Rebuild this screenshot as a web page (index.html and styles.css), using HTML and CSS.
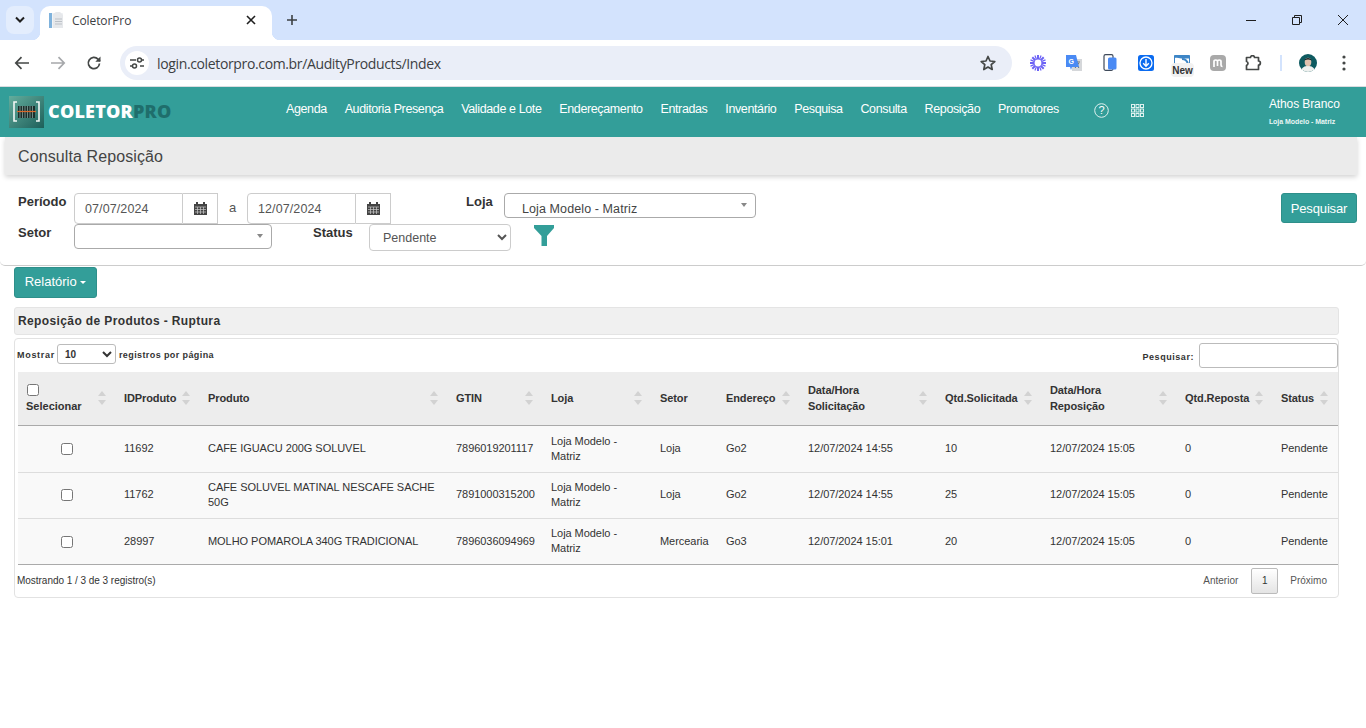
FILE: index.html
```html
<!DOCTYPE html>
<html lang="pt-BR">
<head>
<meta charset="utf-8">
<title>ColetorPro</title>
<link rel="stylesheet" href="styles.css">
</head>
<body>
<div class="tabstrip">
  <div class="tablist"><svg width="12" height="8" viewBox="0 0 12 8"><path d="M2 1.5l4 4 4-4" fill="none" stroke="#1f1f1f" stroke-width="2"/></svg></div>
  <div class="tab">
    <svg class="favicon" width="16" height="16" viewBox="0 0 16 16"><rect x="1" y="1" width="14" height="15" fill="#f1f3f5"/><rect x="1" y="1" width="3" height="15" fill="#7fb2dc"/><path d="M8 0h4l3 3v13H5V2z" fill="#e6e8eb"/><path d="M7 7h7M7 9.500h7M7 12h7" stroke="#bcc1c7"/></svg>
    <span class="tabtitle">ColetorPro</span>
    <svg class="tabclose" width="10" height="10" viewBox="0 0 10 10"><path d="M1 1l8 8M9 1l-8 8" stroke="#1f1f1f" stroke-width="1.6"/></svg>
  </div>
  <svg class="newtab" width="12" height="12" viewBox="0 0 12 12"><path d="M6 1v10M1 6h10" stroke="#3c4043" stroke-width="1.6"/></svg>
  <div class="winctl">
    <svg width="12" height="12" viewBox="0 0 12 12"><path d="M1 6.5h10" stroke="#1f1f1f"/></svg>
    <svg width="12" height="12" viewBox="0 0 12 12"><path d="M1.5 3.5h7v7h-7zM3.5 3.5v-2h7v7h-2" fill="none" stroke="#1f1f1f"/></svg>
    <svg width="12" height="12" viewBox="0 0 12 12"><path d="M1 1l10 10M11 1L1 11" stroke="#1f1f1f"/></svg>
  </div>
</div>
<div class="toolbar">
  <div class="tbtn"><svg width="16" height="14" viewBox="0 0 16 14"><path d="M15 7H2M7.5 1.2L1.8 7l5.7 5.8" fill="none" stroke="#444746" stroke-width="1.7"/></svg></div>
  <div class="tbtn"><svg width="16" height="14" viewBox="0 0 16 14"><path d="M1 7h13M8.500 1.200L14.200 7l-5.700 5.800" fill="none" stroke="#a6a8ab" stroke-width="1.700"/></svg></div>
  <div class="tbtn"><svg width="16" height="16" viewBox="0 0 16 16"><path d="M13.500 8.500a5.600 5.600 0 1 1-1.500-4.300L14 6" fill="none" stroke="#444746" stroke-width="1.700"/><path d="M14.500 1.500v5.200H9.300z" fill="#444746"/></svg></div>
  <div class="omnibox">
    <div class="siteicon"><svg width="14" height="12" viewBox="0 0 14 12"><path d="M0 3h6M10 9h4" stroke="#444746" stroke-width="1.500"/><circle cx="9.500" cy="3" r="2" fill="none" stroke="#444746" stroke-width="1.500"/><circle cx="4.500" cy="9" r="2" fill="none" stroke="#444746" stroke-width="1.500"/><path d="M11.500 3H14M0 9h2.500" stroke="#444746" stroke-width="1.500"/></svg></div>
    <span class="url">login.coletorpro.com.br/AudityProducts/Index</span>
    <svg class="star" width="16" height="16" viewBox="0 0 16 16"><path d="M8 1.500l2 4.500 4.800.5-3.600 3.200 1 4.800L8 12.100l-4.200 2.400 1-4.800L1.200 6.500 6 6z" fill="none" stroke="#444746" stroke-width="1.700" stroke-linejoin="round"/></svg>
  </div>
  <div class="exts">
    <div class="tbtn"><svg width="16" height="16" viewBox="0 0 16 16"><g stroke="#6c63f5" stroke-width="2"><path d="M8 0v16M0 8h16M2.300 2.300l11.400 11.400M13.700 2.300L2.300 13.700"/><path d="M4.900.5l6.200 15M11.100.5L4.900 15.500M.5 4.900l15 6.200M15.500 4.900l-15 6.200" stroke-width="1.200"/></g><circle cx="8" cy="8" r="3.400" fill="#fff"/></svg></div>
    <div class="tbtn"><svg width="18" height="18" viewBox="0 0 18 18"><rect x="7" y="5" width="10" height="12" fill="#d5d7da"/><path d="M9 8h6M12 7v2M10 14l4-5M11 10l3 4" stroke="#6e7277" fill="none"/><path d="M1 1h10l3 12H7l-1 3-1-3H1z" fill="#4a8af4"/><text x="3.500" y="9.500" class="gt">G</text></svg></div>
    <div class="tbtn"><svg width="14" height="17" viewBox="0 0 14 17"><rect x="1" y=".7" width="9" height="15.600" rx="1.500" fill="#fff" stroke="#3f4a5a" stroke-width="1.200"/><rect x="5" y="3.500" width="8.500" height="12" rx="1.500" fill="#4a8af4"/></svg></div>
    <div class="tbtn"><svg width="16" height="16" viewBox="0 0 16 16"><rect width="16" height="16" rx="2.500" fill="#0b6bf0"/><circle cx="8" cy="8" r="6" fill="none" stroke="#fff" stroke-width="1.300"/><path d="M8 4v7M5.200 8.300L8 11.200l2.800-2.900" fill="none" stroke="#fff" stroke-width="1.400"/></svg></div>
    <div class="tbtn newext">
      <svg width="16" height="10" viewBox="0 0 16 10"><path d="M.5 10V.5h15V10" fill="#fff" stroke="#3d85c6"/><path d="M.5.500h15v3H9C6 3.500 4 2 .5 3z" fill="#3d85c6"/><path d="M8 4c3 0 5 1 6 5" fill="none" stroke="#3d85c6" stroke-width="2"/></svg>
      <span class="newbadge">New</span>
    </div>
    <div class="tbtn"><svg width="16" height="16" viewBox="0 0 16 16"><rect width="16" height="16" rx="4" fill="#a9a9a9"/><path d="M4 12V6.500c0-2 3.500-2 3.500 0V11M7.500 6.500c0-2 3.500-2 3.500 0V10c0 1 .5 1.500 1.500 1.500" fill="none" stroke="#fff" stroke-width="1.700"/></svg></div>
    <div class="tbtn"><svg width="18" height="16" viewBox="0 0 18 16"><path d="M1.500 2.500h4c0-2.500 4-2.500 4 0h4v3.500c2.500 0 2.500 4 0 4v4.500h-12v-4c2-1 2-3.500 0-4z" fill="none" stroke="#444746" stroke-width="1.700" stroke-linejoin="round"/></svg></div>
  </div>
  <div class="tsep"></div>
  <div class="tbtn"><svg width="18" height="18" viewBox="0 0 18 18"><defs><clipPath id="av"><circle cx="9" cy="9" r="9"/></clipPath></defs><g clip-path="url(#av)"><rect width="18" height="18" fill="#0e5a60"/><path d="M2 18c0-5 4-6 7-6s7 1 7 6z" fill="#eef0ee"/><ellipse cx="9" cy="8" rx="3.300" ry="4.300" fill="#e0c1ae"/><path d="M5.500 6.500C5.500 3 12.500 3 12.500 6.500 10 5 8 5 5.500 6.500z" fill="#16272a"/></g></svg></div>
  <div class="tbtn"><svg width="4" height="16" viewBox="0 0 4 16"><circle cx="2" cy="2" r="1.600" fill="#444746"/><circle cx="2" cy="8" r="1.600" fill="#444746"/><circle cx="2" cy="14" r="1.600" fill="#444746"/></svg></div>
</div>

<nav class="nav">
  <div class="logo">
    <svg class="logomark" width="35" height="32" viewBox="0 0 35 32"><defs><linearGradient id="lg" x1="0" y1="0" x2="1" y2="1"><stop offset="0" stop-color="#63ad9d"/><stop offset="1" stop-color="#1d5f5a"/></linearGradient></defs><rect width="35" height="32" fill="url(#lg)"/><path d="M8 6H5v19h3M27 6h3v19h-3" fill="none" stroke="#f2f7f5" stroke-width="1.600"/><rect x="9" y="10" width="17" height="12" fill="#1c2d2b"/><path d="M11 10v12M13.500 10v12M16 10v12M18.500 10v12M21 10v12M23.500 10v12" stroke="#6d8b84"/><path d="M8 15.500h19" stroke="#d9692c" stroke-width="1.200"/></svg>
    <span class="logotext">COLETOR<span class="logopro">PRO</span></span>
  </div>
  <div class="menu">
    <a>Agenda</a><a>Auditoria Presença</a><a>Validade e Lote</a><a>Endereçamento</a><a>Entradas</a><a>Inventário</a><a>Pesquisa</a><a>Consulta</a><a>Reposição</a><a>Promotores</a>
  </div>
  <svg class="help" width="15" height="15" viewBox="0 0 15 15"><circle cx="7.500" cy="7.500" r="6.800" fill="none" stroke="#dff1ef"/><text x="7.500" y="11" class="helpq">?</text></svg>
  <svg class="apps" width="13" height="13" viewBox="0 0 13 13"><g fill="none" stroke="#dff1ef"><rect x=".5" y=".5" width="3" height="3"/><rect x="5" y=".5" width="3" height="3"/><rect x="9.500" y=".5" width="3" height="3"/><rect x=".5" y="5" width="3" height="3"/><rect x="5" y="5" width="3" height="3"/><rect x="9.500" y="5" width="3" height="3"/><rect x=".5" y="9.500" width="3" height="3"/><rect x="5" y="9.500" width="3" height="3"/><rect x="9.500" y="9.500" width="3" height="3"/></g></svg>
  <div class="user">
    <div class="username">Athos Branco</div>
    <div class="userstore">Loja Modelo - Matriz</div>
  </div>
</nav>

<div class="crumb">Consulta Reposição</div>

<section class="filters">
  <div class="frows">
    <div class="frow">
      <label class="flabel lper">Período</label>
      <div class="dategroup"><span class="dateval">07/07/2024</span><span class="addon"><svg class="cal" width="13" height="13" viewBox="0 0 13 13"><path d="M0 2h13v11H0z" fill="#444"/><path d="M3 0v3M10 0v3" stroke="#444" stroke-width="2"/><path d="M1 5h11M1 7.500h11M1 10h11M3.500 5v7M6.500 5v7M9.500 5v7" stroke="#ccc" stroke-width=".7"/></svg></span></div>
      <span class="ate">a</span>
      <div class="dategroup"><span class="dateval">12/07/2024</span><span class="addon"><svg class="cal" width="13" height="13" viewBox="0 0 13 13"><path d="M0 2h13v11H0z" fill="#444"/><path d="M3 0v3M10 0v3" stroke="#444" stroke-width="2"/><path d="M1 5h11M1 7.500h11M1 10h11M3.500 5v7M6.500 5v7M9.500 5v7" stroke="#ccc" stroke-width=".7"/></svg></span></div>
      <label class="flabel lloja">Loja</label>
      <div class="sel2 sel2loja"><span>Loja Modelo - Matriz</span><i class="sel2arrow"></i></div>
    </div>
    <div class="frow">
      <label class="flabel lset">Setor</label>
      <div class="sel2 sel2setor"><i class="sel2arrow"></i></div>
      <label class="flabel lstat">Status</label>
      <select class="statussel"><option>Pendente</option></select>
      <svg class="funnel" width="20" height="21" viewBox="0 0 20 21"><path d="M0 0h20v3l-7 8v10H7.500V11L0 3z" fill="#339e99"/></svg>
    </div>
  </div>
  <button class="btn btnsearch">Pesquisar</button>
</section>

<button class="btn btnreport">Relatório <i class="caret"></i></button>

<div class="ptitle">Reposição de Produtos - Ruptura</div>

<div class="panel">
  <div class="tctl">
    <div class="lenctl"><span class="lenlabel">Mostrar</span><select class="lensel"><option>10</option></select><span>registros por página</span></div>
    <div class="searchctl"><span>Pesquisar:</span><input class="searchinput" type="text"></div>
  </div>
  <table class="grid">
    <thead>
      <tr>
        <th class="c1"><input type="checkbox" class="chkhead"><br>Selecionar<i class="sort"></i></th>
        <th class="c2">IDProduto<i class="sort"></i></th>
        <th class="c3">Produto<i class="sort"></i></th>
        <th class="c4">GTIN<i class="sort"></i></th>
        <th class="c5">Loja<i class="sort"></i></th>
        <th class="c6">Setor</th>
        <th class="c7">Endereço<i class="sort"></i></th>
        <th class="c8">Data/Hora<br>Solicitação<i class="sort"></i></th>
        <th class="c9">Qtd.Solicitada<i class="sort"></i></th>
        <th class="c10">Data/Hora<br>Reposição<i class="sort"></i></th>
        <th class="c11">Qtd.Reposta<i class="sort"></i></th>
        <th class="c12">Status<i class="sort"></i></th>
      </tr>
    </thead>
    <tbody>
      <tr>
        <td class="tc"><input type="checkbox"></td><td>11692</td><td>CAFE IGUACU 200G SOLUVEL</td><td>7896019201117</td><td>Loja Modelo - Matriz</td><td>Loja</td><td>Go2</td><td>12/07/2024 14:55</td><td>10</td><td>12/07/2024 15:05</td><td>0</td><td>Pendente</td>
      </tr>
      <tr>
        <td class="tc"><input type="checkbox"></td><td>11762</td><td>CAFE SOLUVEL MATINAL NESCAFE SACHE 50G</td><td>7891000315200</td><td>Loja Modelo - Matriz</td><td>Loja</td><td>Go2</td><td>12/07/2024 14:55</td><td>25</td><td>12/07/2024 15:05</td><td>0</td><td>Pendente</td>
      </tr>
      <tr>
        <td class="tc"><input type="checkbox"></td><td>28997</td><td>MOLHO POMAROLA 340G TRADICIONAL</td><td>7896036094969</td><td>Loja Modelo - Matriz</td><td>Mercearia</td><td>Go3</td><td>12/07/2024 15:01</td><td>20</td><td>12/07/2024 15:05</td><td>0</td><td>Pendente</td>
      </tr>
    </tbody>
  </table>
  <div class="tfoot">
    <span class="tinfo">Mostrando 1 / 3 de 3 registro(s)</span>
    <div class="pager"><span>Anterior</span><span class="pcur">1</span><span>Próximo</span></div>
  </div>
</div>
</body>
</html>
```
FILE: styles.css
```css
* { box-sizing: border-box; }
html, body { margin: 0; padding: 0; background: #fff; overflow: hidden; }
body { font-family: "Liberation Sans", Arial, sans-serif; color: #333; width: 1366px; height: 728px; }

.tabstrip { height: 40px; background: #d3e3fd; display: flex; align-items: flex-start; padding: 6px 0 0 6px; }
.tablist { width: 28px; height: 28px; border-radius: 8px; background: #e3edfd; display: flex; align-items: center; justify-content: center; }
.tab { position: relative; margin-left: 6px; width: 232px; height: 34px; background: #fff; border-radius: 10px 10px 0 0; display: flex; align-items: center; padding: 0 16px 6px 8px; }
.tab::before, .tab::after { content: ""; position: absolute; bottom: 0; width: 8px; height: 8px; }
.tab::before { left: -8px; background: radial-gradient(circle at 0 0, #d3e3fd 8px, #fff 8.5px); }
.tab::after { right: -8px; background: radial-gradient(circle at 100% 0, #d3e3fd 8px, #fff 8.5px); }
.favicon { margin-right: 8px; }
.tabtitle { flex: 1; font: 12px "Open Sans", sans-serif; color: #3c4043; letter-spacing: -.1px; }
.newtab { margin: 8px 0 0 14px; }
.winctl { margin-left: auto; display: flex; gap: 34px; padding: 8px 17px 0 0; }

.toolbar { height: 47px; background: #fff; border-radius: 10px 10px 0 0; border-bottom: 1px solid #dadce0; display: flex; align-items: center; padding: 0 4px 1px; margin-bottom: 0; }
.tbtn { width: 36px; height: 34px; display: flex; align-items: center; justify-content: center; flex: none; }
.omnibox { margin-left: 8px; width: 892px; height: 34px; border-radius: 17px; background: #eaeef8; display: flex; align-items: center; padding: 0 16px 0 5px; }
.siteicon { width: 24px; height: 24px; border-radius: 50%; background: #fff; display: flex; align-items: center; justify-content: center; }
.url { margin-left: 8px; padding-top: 1px; font: 14px "Open Sans", sans-serif; letter-spacing: -.36px; color: #3c4043; flex: 1; }
.exts { margin-left: 8px; display: flex; }
.newext { position: relative; align-items: flex-start; padding-top: 9px; }
.newbadge { position: absolute; left: 7px; top: 17px; width: 23px; height: 14px; border-radius: 4px; background: #f1f1f1; font: bold 10px/15px "Liberation Sans", sans-serif; color: #333; text-align: center; }
.tsep { width: 2px; height: 16px; background: #d3e3fd; margin: 0 8px 0 8px; }
.gt { font: bold 7px "Liberation Sans", sans-serif; fill: #fff; }

.nav { height: 50px; background: #339e99; display: flex; align-items: center; position: relative; }
.logo { display: flex; align-items: center; width: 286px; flex: none; padding-left: 9px; }
.logotext { margin: 0 0 2px 4px; font: 800 18px "Open Sans", sans-serif; color: #fff; letter-spacing: .2px; }
.logopro { color: #1f6e6c; }
.menu { display: flex; flex: none; gap: 17.830px; margin-top: -6px; }
.menu a { font-size: 12.500px; color: #fff; letter-spacing: -.38px; white-space: nowrap; }
.help { flex: none; margin: -4px 0 0 35px; }
.helpq { font: 11px "Liberation Sans", sans-serif; fill: #fff; text-anchor: middle; }
.apps { flex: none; margin: -4px 0 0 22px; }
.user { flex: none; margin: -2px 0 0 125px; color: #fff; }
.username { font-size: 12px; letter-spacing: -.1px; line-height: 16px; }
.userstore { font-size: 7px; font-weight: bold; line-height: 10px; margin-top: 5px; letter-spacing: -.05px; color: #e9f6f5; }

.crumb { margin: 0 9px 0 5px; height: 38px; background: #ebebeb; box-shadow: 0 2px 5px rgba(0,0,0,.18); font-size: 16px; line-height: 39px; padding-left: 13px; color: #444; letter-spacing: .1px; }

.filters { height: 91px; border-bottom: 1px solid #ccc; border-radius: 0 0 5px 5px; display: flex; justify-content: space-between; padding: 18px 9px 0 18px; }
.frows { display: flex; flex-direction: column; }
.frow { display: flex; align-items: flex-start; }
.flabel { font-size: 13px; font-weight: bold; color: #333; line-height: 16px; margin-top: 1px; }
.lper { width: 56px; }
.lset { width: 56px; }
.dategroup { display: flex; height: 31px; width: 144px; }
.dateval { width: 109px; border: 1px solid #ccc; border-radius: 4px 0 0 4px; font-size: 12.500px; line-height: 31px; padding-left: 10px; color: #555; letter-spacing: .1px; }
.addon { flex: 1; border: 1px solid #ccc; border-left: 0; display: flex; align-items: center; justify-content: center; }
.ate { width: 29px; text-align: center; font-size: 13px; color: #555; line-height: 29px; }
.lloja { margin-left: 75px; width: 38px; }
.sel2 { position: relative; height: 25px; border: 1px solid #aaa; border-radius: 4px; background: #fff; font-size: 12.500px; color: #444; }
.sel2 span { display: block; padding: 7px 0 0 17px; line-height: 16px; letter-spacing: .1px; }
.sel2loja { width: 252px; }
.sel2setor { width: 198px; }
.sel2arrow { position: absolute; right: 8px; top: 9px; border: 3px solid transparent; border-top: 4px solid #888; border-bottom: 0; }
.lstat { margin-left: 41px; width: 56px; }
.statussel { width: 142px; height: 27px; border: 1px solid #ccc; border-radius: 4px; background: #fff; font: 12.500px "Liberation Sans", sans-serif; color: #555; padding-left: 9px; }
.funnel { margin: 1px 0 0 23px; }
.btn { border: 1px solid #2e8f8a; border-radius: 3px; background: #339e99; color: #fff; font: 13px "Liberation Sans", sans-serif; padding: 0; }
.btnsearch { width: 76px; height: 30px; letter-spacing: -.15px; }
.btnreport { display: block; margin: 1px 0 0 14px; width: 83px; height: 31px; padding-bottom: 2px; }
.caret { display: inline-block; vertical-align: middle; border: 3px solid transparent; border-top-color: #fff; border-bottom: 0; }

.ptitle { margin: 9px 27px 0 14px; height: 28px; border: 1px solid #e4e4e4; border-radius: 3px; background: #f0f0f0; font-size: 12px; font-weight: bold; line-height: 26px; padding-left: 3px; letter-spacing: .38px; color: #333; }
.panel { margin: 3px 27px 0 14px; height: 260px; border: 1px solid #e2e2e2; border-radius: 4px; padding-left: 3px; }
.tctl { height: 33px; display: flex; justify-content: space-between; align-items: flex-start; }
.lenctl, .searchctl { display: flex; align-items: center; font-size: 9px; font-weight: bold; letter-spacing: .4px; color: #333; }
.lenctl span, .searchctl span { padding-top: 2px; }
.lenctl .lenlabel { letter-spacing: .7px; }
.lenctl { margin-top: 5px; margin-left: -1px; }
.searchctl { margin-top: 4px; letter-spacing: .55px; }
.lensel { width: 59px; height: 20px; margin: 0 3px 0 2px; border: 1px solid #bbb; border-radius: 3px; background: #fff; font: bold 10px "Liberation Sans", sans-serif; color: #333; padding-left: 3px; }
.searchinput { width: 139px; height: 25px; margin-left: 5px; border: 1px solid #bbb; border-radius: 3px; background: #fff; }

.grid { width: 1320px; table-layout: fixed; border-collapse: collapse; font-size: 11px; color: #333; letter-spacing: -.05px; }
.grid th { position: relative; height: 53px; background: #ededed; border-bottom: 1px solid #aaa; text-align: left; padding: 0 8px; font-weight: bold; line-height: 16px; letter-spacing: -.1px; }
.grid th.c1 { letter-spacing: 0; }
.grid td { height: 46px; background: #f9f9f9; border-bottom: 1px solid #ddd; padding: 0 8px 1px; line-height: 15px; }
.grid tbody tr:first-child td { height: 47px; padding-bottom: 0; }
.grid tbody tr:last-child td { padding-bottom: 0; border-bottom-color: #aaa; }
.grid .tc { text-align: center; padding-right: 9px; }
.grid input { width: 12px; height: 12px; }
.grid td input { margin: 0; vertical-align: middle; }
.chkhead { margin: 0 0 2px 1px; vertical-align: middle; }
.c1 { width: 98px; } .c2 { width: 84px; } .c3 { width: 248px; } .c4 { width: 95px; } .c5 { width: 109px; } .c6 { width: 66px; }
.c7 { width: 82px; } .c8 { width: 137px; } .c9 { width: 105px; } .c10 { width: 135px; } .c11 { width: 96px; } .c12 { width: 65px; }
.sort { position: absolute; right: 10px; top: 50%; margin-top: -7px; width: 8px; height: 14px; }
.sort::before, .sort::after { content: ""; position: absolute; left: 0; border: 4px solid transparent; }
.sort::before { top: 0; border-top: 0; border-bottom: 5px solid #d2d2d2; }
.sort::after { bottom: 0; border-bottom: 0; border-top: 5px solid #d2d2d2; }

.tfoot { display: flex; justify-content: space-between; align-items: center; height: 32px; font-size: 10px; padding: 0 11px 0 0; }
.tinfo { margin-left: -1px; letter-spacing: -.03px; }
.pager { display: flex; align-items: center; color: #555; }
.pcur { width: 27px; height: 26px; margin: 0 12px 0 13px; border: 1px solid #bbb; border-radius: 2px; background: linear-gradient(#fff, #e4e4e4); text-align: center; line-height: 24px; color: #333; }
```
